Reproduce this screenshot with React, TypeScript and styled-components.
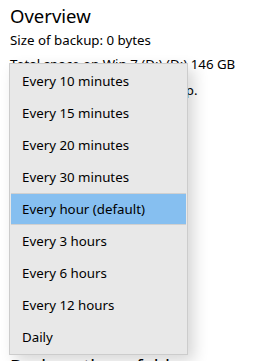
import styled, { createGlobalStyle } from "styled-components";

const GlobalStyle = createGlobalStyle`
  html, body {
    margin: 0;
    padding: 0;
    background: #ffffff;
  }
  body {
    font-family: "Noto Sans", "Open Sans", sans-serif;
    color: #000000;
    overflow: hidden;
  }
`;

const Page = styled.div`
  position: relative;
  width: 256px;
  height: 361px;
  overflow: hidden;
  padding: 0 10px;
  box-sizing: border-box;
`;

const Heading = styled.h2<{ $top: number }>`
  margin: ${(p) => p.$top}px 0 0;
  font-size: 18.5px;
  font-weight: 400;
  line-height: 28px;
  white-space: nowrap;
`;

const Line = styled.div<{ $top: number; $spacing?: number }>`
  margin-top: ${(p) => p.$top}px;
  font-size: 13.3px;
  line-height: 20px;
  letter-spacing: ${(p) => p.$spacing ?? 0}px;
  white-space: nowrap;
`;

const Menu = styled.ul`
  position: absolute;
  top: 63px;
  left: 9px;
  width: 179px;
  margin: 0;
  padding: 1px 0;
  list-style: none;
  box-sizing: border-box;
  background: #e8e8e8;
  border: 1px solid #cccccc;
  box-shadow: 6px 6px 14px rgba(0, 0, 0, 0.16);
`;

const Item = styled.li<{ $selected?: boolean }>`
  height: 32px;
  display: flex;
  align-items: center;
  padding-left: 11px;
  margin: 0 1px;
  font-size: 13.3px;
  white-space: nowrap;
  background: ${(p) => (p.$selected ? "#86bff0" : "transparent")};
  border-top: 1px solid ${(p) => (p.$selected ? "#d0d0d0" : "transparent")};
  border-bottom: 1px solid ${(p) => (p.$selected ? "#d0d0d0" : "transparent")};
  box-sizing: border-box;
`;

const options = [
  "Every 10 minutes",
  "Every 15 minutes",
  "Every 20 minutes",
  "Every 30 minutes",
  "Every hour (default)",
  "Every 3 hours",
  "Every 6 hours",
  "Every 12 hours",
  "Daily",
];

export default function App() {
  return (
    <>
      <GlobalStyle />
      <Page>
        <Heading $top={2}>Overview</Heading>
        <Line $top={0}>Size of backup: 0 bytes</Line>
        <Line $top={4}>Total space on Win 7 (D:) (D:) 146 GB</Line>
        <Line $top={6} $spacing={-0.15}>
          Your data is not yet backed up.
        </Line>
        <Heading $top={252}>Back up these folders</Heading>
        <Menu>
          {options.map((o) => (
            <Item key={o} $selected={o === "Every hour (default)"}>
              {o}
            </Item>
          ))}
        </Menu>
      </Page>
    </>
  );
}
